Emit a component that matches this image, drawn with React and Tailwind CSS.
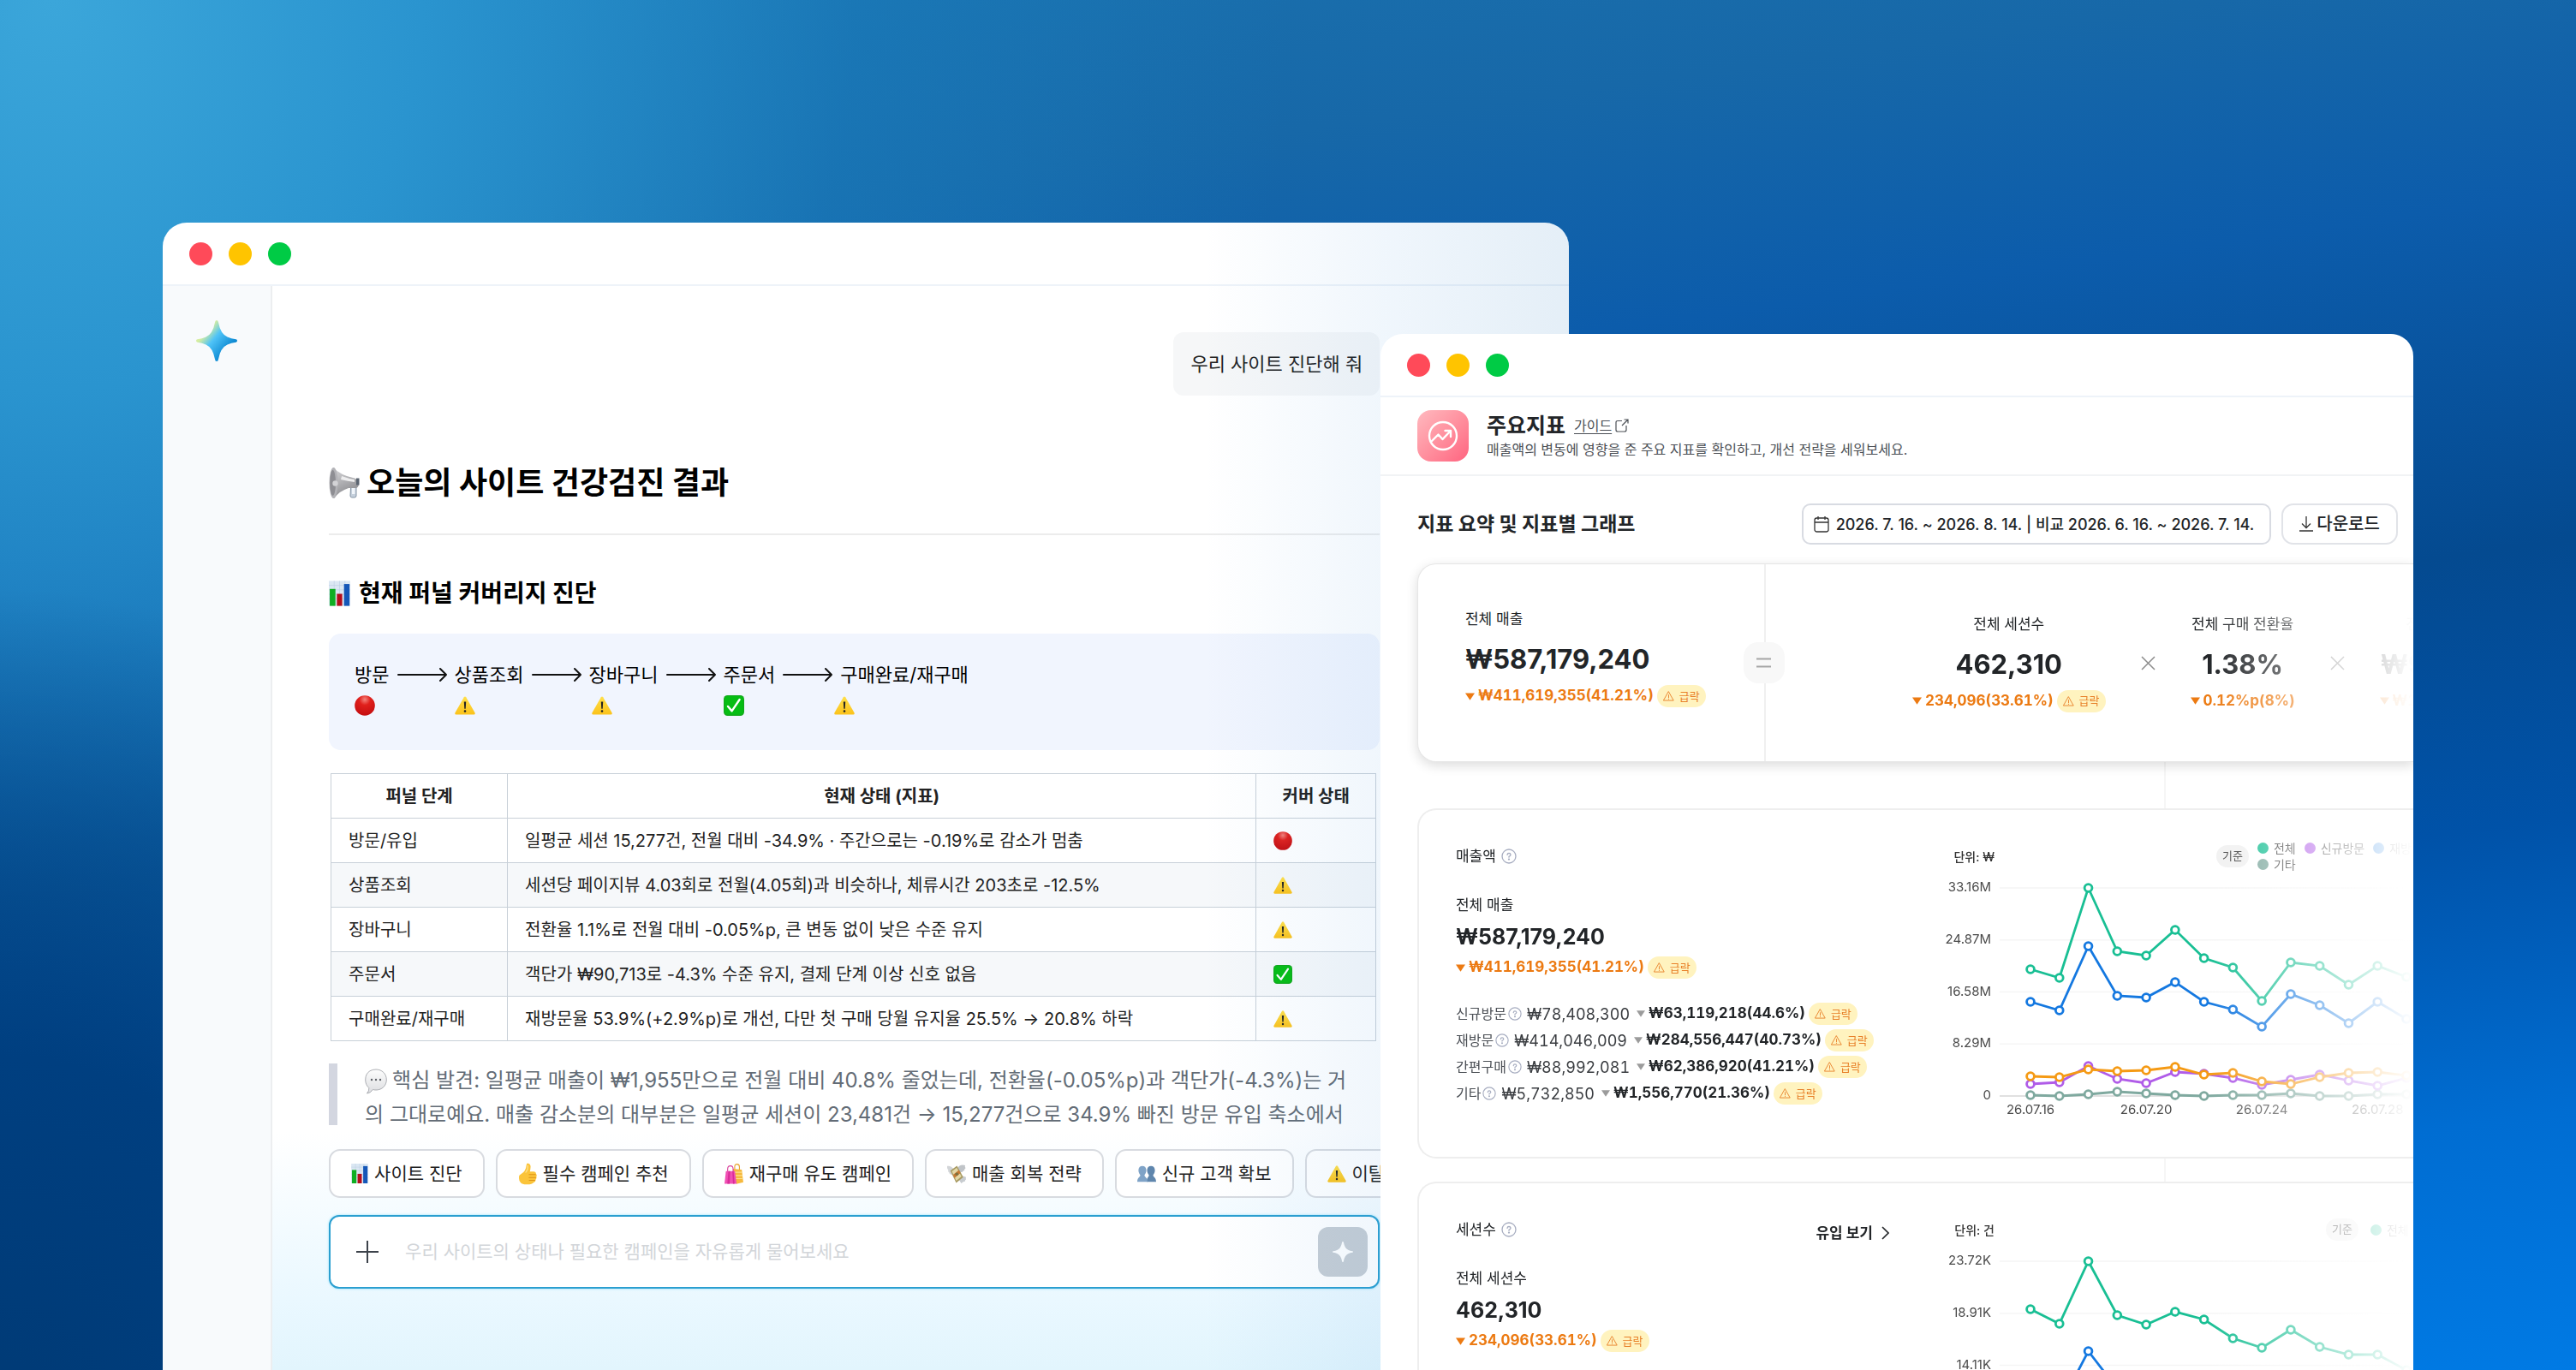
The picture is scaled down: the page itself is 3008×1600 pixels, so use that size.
import React from 'react';

const steps = ['방문', '상품조회', '장바구니', '주문서', '구매완료/재구매'];

const funnelRows = [
  { step: '방문/유입', text: '일평균 세션 15,277건, 전월 대비 -34.9% · 주간으로는 -0.19%로 감소가 멈춤', state: 'bad' },
  { step: '상품조회', text: '세션당 페이지뷰 4.03회로 전월(4.05회)과 비슷하나, 체류시간 203초로 -12.5%', state: 'warn' },
  { step: '장바구니', text: '전환율 1.1%로 전월 대비 -0.05%p, 큰 변동 없이 낮은 수준 유지', state: 'warn' },
  { step: '주문서', text: '객단가 ₩90,713로 -4.3% 수준 유지, 결제 단계 이상 신호 없음', state: 'ok' },
  { step: '구매완료/재구매', text: '재방문율 53.9%(+2.9%p)로 개선, 다만 첫 구매 당월 유지율 25.5% → 20.8% 하락', state: 'warn' },
];

const breakdown = [
  { name: '신규방문', value: '₩78,408,300', diff: '₩63,119,218(44.6%)' },
  { name: '재방문', value: '₩414,046,009', diff: '₩284,556,447(40.73%)' },
  { name: '간편구매', value: '₩88,992,081', diff: '₩62,386,920(41.21%)' },
  { name: '기타', value: '₩5,732,850', diff: '₩1,556,770(21.36%)' },
];

const salesSeries = [
  { color: '#7fa99f', points: [242, 243, 241, 238, 240, 242, 243, 242, 242, 240, 243, 243, 241, 241] },
  { color: '#b05ce8', points: [229, 227, 208, 223, 228, 215, 217, 222, 230, 224, 218, 225, 231, 222] },
  { color: '#f59a14', points: [220, 221, 212, 214, 213, 209, 218, 216, 226, 229, 221, 216, 215, 219] },
  { color: '#1478e0', points: [133, 143, 68, 126, 128, 110, 133, 142, 162, 124, 137, 158, 133, 153] },
  { color: '#19bf94', points: [95, 105, 0, 74, 79, 49, 82, 93, 132, 87, 91, 113, 91, 104] },
];

const sessionSeries = [
  { color: '#1478e0', points: [160, 170, 105, 149, 152, 150, 155, 160, 166, 158, 163, 168, 166, 170] },
  { color: '#19bf94', points: [56, 73, 0, 63, 74, 59, 68, 90, 101, 80, 100, 109, 109, 127] },
];

/* ---------- emoji style icons ---------- */

function RedDot({ className }) {
  return (
    <svg viewBox="0 0 24 24" className={className}>
      <defs>
        <radialGradient id="redDot" cx="0.5" cy="0.2" r="0.8">
          <stop offset="0" stopColor="#f4837c" />
          <stop offset="0.35" stopColor="#e0201c" />
          <stop offset="1" stopColor="#c40d10" />
        </radialGradient>
      </defs>
      <circle cx="12" cy="12" r="11.8" fill="url(#redDot)" />
    </svg>
  );
}

function Warning({ className }) {
  return (
    <svg viewBox="0 0 24 24" className={className}>
      <defs>
        <linearGradient id="warn" x1="0" y1="0" x2="0" y2="1">
          <stop offset="0" stopColor="#ffe04a" />
          <stop offset="1" stopColor="#fbc21b" />
        </linearGradient>
      </defs>
      <path d="M10.8 2.3Q12 .6 13.2 2.3L23.6 20.6Q24.2 22.4 22.4 22.5H1.6Q-.2 22.4.4 20.6Z" fill="url(#warn)" />
      <path d="M10.8 7.6h2.4l-.5 8.2h-1.4z" fill="#222" />
      <circle cx="12" cy="18.6" r="1.3" fill="#222" />
    </svg>
  );
}

function CheckBox({ className }) {
  return (
    <svg viewBox="0 0 24 24" className={className}>
      <rect width="24" height="24" rx="4.5" fill="#12a81b" />
      <rect x="1.2" y="1" width="21.6" height="21.6" rx="3.8" fill="#06bd14" />
      <path d="M5 13l4.6 5.4L18.6 5" fill="none" stroke="#fff" strokeWidth="2.4" strokeLinecap="round" strokeLinejoin="round" />
    </svg>
  );
}

function Bars({ className }) {
  return (
    <svg viewBox="0 0 24 28" className={className}>
      <rect width="24" height="28" fill="#dbe7f3" />
      <path d="M0 5h24M0 10h24M0 15h24M0 20h24M6 0v28M12 0v28M18 0v28" stroke="#bccfe2" strokeWidth="0.6" />
      <rect x="1" y="9" width="6.4" height="19" fill="#0fae22" />
      <rect x="9" y="14.5" width="6" height="13.5" fill="#b50d1b" />
      <rect x="17" y="3.5" width="6.2" height="24.5" fill="#1557b8" />
    </svg>
  );
}

function Megaphone({ className }) {
  return (
    <svg viewBox="0 0 36 38" className={className}>
      <defs>
        <linearGradient id="horn" x1="0" y1="0" x2="0.4" y2="1">
          <stop offset="0" stopColor="#d9d9db" />
          <stop offset="1" stopColor="#8b8b8f" />
        </linearGradient>
      </defs>
      <path d="M26 17h6v17q0 2-2 2h-3q-2 0-2-2z" fill="#c5d0dc" stroke="#8796a6" />
      <path d="M27 20h3.5v12H27z" fill="#f0f5fa" />
      <path d="M5 1Q14 10 28 13q6 1 7 6 0 6-4 6h-8Q13 28 6 37z" fill="url(#horn)" />
      <path d="M15 11q8 3 15 4v3q-8-1-16-3z" fill="#ededee" />
      <ellipse cx="5.5" cy="19" rx="5" ry="18" fill="#b3b3b7" />
      <ellipse cx="4.6" cy="19" rx="3.4" ry="15" fill="#8e8e93" />
      <circle cx="7.5" cy="19.5" r="3.2" fill="#d3d3d6" />
      <path d="M32 13.5h3.5v8H32z" fill="#5a6470" />
    </svg>
  );
}

function Speech({ className }) {
  return (
    <svg viewBox="0 0 26 30" className={className}>
      <defs>
        <linearGradient id="speech" x1="0" y1="0" x2="0" y2="1">
          <stop offset="0" stopColor="#fdfdfd" />
          <stop offset="1" stopColor="#dcdde0" />
        </linearGradient>
      </defs>
      <path
        d="M13 1C20 1 25.3 6 25.3 13S20 25 13 25q-2 0-3.700-.5Q7 28.500 2.500 29 5.300 26 4.800 22.500.7 19 .7 13 .7 6 6 2.700 9 1 13 1z"
        fill="url(#speech)"
        stroke="#a4a6ab"
        strokeWidth="0.9"
      />
      <circle cx="8" cy="13" r="1.200" fill="#5d6066" />
      <circle cx="13" cy="13" r="1.200" fill="#5d6066" />
      <circle cx="18" cy="13" r="1.200" fill="#5d6066" />
    </svg>
  );
}

function Thumb({ className }) {
  return (
    <svg viewBox="0 0 24 28" className={className}>
      <path
        d="M10.500 3q.3-3 2.300-2.500Q16.500 1.500 15.800 6q-.2 3-.8 5h5.200q3 .3 2.600 3 1.600 1.400.4 3.600.8 2-.8 3.600.2 2.800-2.600 3.600-2 2.600-8.200 2.600-6 .2-8.300-2.200Q.8 23 1.200 18.600.6 15.500 3.600 14.400 10 10.500 10.500 3z"
        fill="#fbc43a"
      />
      <path d="M14 14.800h8M14 18.600h8.400M14.200 22.300h7" stroke="#dd9318" strokeWidth="1.100" strokeLinecap="round" />
      <path d="M12.300 3.500q.8 4.500-2.500 8.500" fill="none" stroke="#ffe08a" strokeWidth="1.400" strokeLinecap="round" />
    </svg>
  );
}

function Bags({ className }) {
  return (
    <svg viewBox="0 0 24 26" className={className}>
      <path d="M13 8V4q0-3.400 3-3.400T19 4v4" fill="none" stroke="#e8a32c" strokeWidth="1.200" />
      <path d="M10.500 6.500 22 7.500l2 16-9 2.200z" fill="#f6b93d" />
      <path d="M13 11h9.500M13.500 15h9.500M14 19h9.500" stroke="#fbe08c" strokeWidth="1.200" />
      <path d="M4 11V7q0-4.200 3.500-4.200T11 7v4" fill="none" stroke="#d8439c" strokeWidth="1.200" />
      <path d="M1.800 9.500h11.400l2.300 16H0z" fill="#f04fb4" />
      <path d="M5 9.500h2.200l-.6 16H3.600zM10 9.500h1.600l1.200 16h-2z" fill="#d92d98" />
    </svg>
  );
}

function Money({ className }) {
  return (
    <svg viewBox="0 0 24 26" className={className}>
      <path d="M13 6q3-6 10-4-1 1.500.5 3.500-2 1-1.500 3-2 .2-2.500 2l-5 .5z" fill="#c0c4c8" />
      <path d="M0 3q5-1 8.500 4l-2 7Q3 14 2.500 11 .5 10 1.500 8-.5 6 0 3z" fill="#d2d5d8" />
      <path d="M14 19q5-5 10-2-.5 1.600 0 3-1.500.6-1 2.400-2.500.6-5 2.600z" fill="#c8ccd0" />
      <path d="M4 9 12.500 2.500 20.500 17l-9 7.500z" fill="#a89a62" />
      <path d="M6 9.800 12.200 5l6 11.300-6.600 5.500z" fill="#e3d7a6" />
      <path d="M7.500 14.200 15 8.200l2 3.800-7.500 6.300z" fill="#c87a34" />
      <circle cx="12.300" cy="13.300" r="2" fill="#7c7140" />
    </svg>
  );
}

function People({ className }) {
  return (
    <svg viewBox="0 0 24 24" className={className}>
      <path d="M17.500 2c3 0 5 2.200 5 5.400 0 3-1.300 4.600-2.300 6 0 3 3.800 3 3.800 8.600H12c0-5.600 2.800-5.600 2.800-8.600-1-1.400-2.300-3-2.300-6C12.500 4.200 14.500 2 17.500 2z" fill="#5f86ad" />
      <path d="M6.500 2c3 0 5 2.200 5 5.400 0 3-1.300 4.600-2.300 6 0 3 3.800 3 3.800 8.600H0c0-5.600 3.800-5.600 3.800-8.600-1-1.400-2.300-3-2.300-6C1.500 4.200 3.500 2 6.500 2z" fill="#7fa3c7" />
    </svg>
  );
}

function StateIcon({ state, className }) {
  if (state === 'bad') return <RedDot className={className} />;
  if (state === 'ok') return <CheckBox className={className} />;
  return <Warning className={className} />;
}

/* ---------- ui icons ---------- */

function Sparkle({ className, gradient }) {
  return (
    <svg viewBox="0 0 48 48" className={className}>
      <defs>
        <linearGradient id="sparkle" x1="0.15" y1="0.2" x2="0.8" y2="0.75">
          <stop offset="0.15" stopColor="#d5eda0" />
          <stop offset="0.45" stopColor="#4fc3f7" />
          <stop offset="1" stopColor="#0784cf" />
        </linearGradient>
      </defs>
      <path
        d="M24 0q1.800 0 2 2.500Q28.500 16 36.500 19.500 41 21.800 46.500 22.300 48 22.600 48 24t-1.500 1.700Q41 26.200 36.500 28.500 28.500 32 26 45.500 25.800 48 24 48t-2-2.500Q19.500 32 11.500 28.500 7 26.200 1.500 25.700 0 25.400 0 24t1.500-1.700Q7 21.800 11.500 19.500 19.500 16 22 2.500 22.200 0 24 0z"
        fill={gradient ? 'url(#sparkle)' : 'currentColor'}
      />
    </svg>
  );
}

function LongArrow() {
  return (
    <svg viewBox="0 0 58 20" className="h-5 w-[58px] shrink-0" fill="none" stroke="#111" strokeWidth="2" strokeLinecap="round" strokeLinejoin="round">
      <path d="M1 10h56M50 3l7 7-7 7" />
    </svg>
  );
}

function Help({ className }) {
  return (
    <svg viewBox="0 0 18 18" className={className} fill="none" stroke="#a7adc0" strokeWidth="1.300" strokeLinecap="round">
      <circle cx="9" cy="9" r="8" />
      <path d="M7 7.400Q7.200 5.500 9 5.500t2 1.700Q11 8.300 9 9.400v.8" />
      <circle cx="9" cy="12.600" r="0.500" fill="#a7adc0" />
    </svg>
  );
}

function Down({ className }) {
  return (
    <svg viewBox="0 0 12 9" className={className}>
      <path d="M0 0h12L6 9z" fill="currentColor" />
    </svg>
  );
}

function Times() {
  return (
    <svg viewBox="0 0 17 17" className="size-[17px] shrink-0" stroke="#8c8c8c" strokeWidth="1.500">
      <path d="M1 1l15 15M16 1 1 16" />
    </svg>
  );
}

function DropBadge() {
  return (
    <span className="flex h-[26px] items-center gap-1.5 rounded-full bg-[#fff3bf] px-[7px] text-[13px] leading-none font-normal text-[#e8812a]">
      <svg viewBox="0 0 14 13" className="h-3 w-[13px]" fill="none" stroke="currentColor" strokeWidth="1" strokeLinejoin="round" strokeLinecap="round">
        <path d="M7 1l6.200 11H.8zM7 5v3.500M7 10.200v.1" />
      </svg>
      급락
    </span>
  );
}

function Dots() {
  return (
    <div className="flex h-[74px] items-center gap-[19px] border-b-2 border-[#eef3f9] px-[31px]">
      <span className="size-[27px] rounded-full bg-[#ff4a59]" />
      <span className="size-[27px] rounded-full bg-[#ffc400]" />
      <span className="size-[27px] rounded-full bg-[#00cb45]" />
    </div>
  );
}

function Chip({ icon, children }) {
  return (
    <button className="flex h-[57px] shrink-0 items-center gap-[7px] rounded-[13px] border-2 border-[#d8dbe0] bg-white px-6 text-[21px] whitespace-nowrap text-[#222]">
      {icon}
      {children}
    </button>
  );
}

function Delta({ children, badge = true }) {
  return (
    <p className="flex h-[26px] items-center gap-1 text-[17px] font-bold whitespace-nowrap text-[#ec7a12] tabular-nums">
      <Down className="h-[9px] w-[11px]" />
      <span>{children}</span>
      {badge && <DropBadge />}
    </p>
  );
}

function Metric({ label, value, delta, badge }) {
  return (
    <div className="flex shrink-0 flex-col items-center">
      <p className="text-[17px] leading-6">{label}</p>
      <p className="mt-[17px] mb-3 text-[31px] leading-9 font-bold">{value}</p>
      <Delta badge={badge}>{delta}</Delta>
    </div>
  );
}

function Chart({ series, ticks, dates }) {
  const x = (i) => 106 + i * 33.77;
  return (
    <svg viewBox="0 0 553 290" className="h-[290px] w-[553px] shrink-0" fontSize="15" fill="#4a4a4a">
      {ticks.map((tick, i) => (
        <g key={tick}>
          <line x1="70" x2="553" y1={18 + i * 60.75} y2={18 + i * 60.75} stroke={tick === '0' ? '#d6d6d6' : '#f5f5f5'} strokeWidth="1.500" />
          <text x="60" y={22 + i * 60.75} textAnchor="end">{tick}</text>
        </g>
      ))}
      {dates.map((date, i) => (
        <text key={date} x={x(i * 4)} y="282" textAnchor="middle">{date}</text>
      ))}
      {series.map((s) => (
        <g key={s.color} stroke={s.color} strokeWidth="2.800">
          <polyline fill="none" points={s.points.map((y, i) => `${x(i)},${y + 18}`).join(' ')} />
          {s.points.map((y, i) => (
            <circle key={i} cx={x(i)} cy={y + 18} r="4.400" fill="#fff" />
          ))}
        </g>
      ))}
    </svg>
  );
}

function LegendItem({ dot, children }) {
  return (
    <span className="flex h-[19px] shrink-0 items-center gap-1.5 text-[14px] whitespace-nowrap">
      <span className={`size-[13px] rounded-full ${dot}`} />
      {children}
    </span>
  );
}

const fade = '[mask-image:linear-gradient(to_right,black_calc(100%-240px),transparent_100%)]';

function ChatWindow() {
  return (
    <section className="absolute top-[260px] bottom-0 left-[6.32%] flex w-[54.59%] flex-col overflow-hidden rounded-t-[28px] bg-white">
      <Dots />
      <div className="flex min-h-0 flex-1">
        <aside className="w-32 shrink-0 border-r-2 border-[#eceef0] bg-[#f8fafc] pt-10">
          <Sparkle className="mx-auto size-12" gradient />
        </aside>
        <div className="flex min-w-0 flex-1 flex-col">
          <div className="pr-[221px] pl-[66px] pt-[54px]">
            <p className="ml-auto flex h-[74px] w-fit items-center rounded-xl bg-[#f6f7f8] px-5 text-[22px] text-[#222]">우리 사이트 진단해 줘</p>

            <h1 className="mt-[78px] flex h-12 items-center gap-2 text-[36px] font-bold text-black">
              <Megaphone className="h-[38px] w-9" />
              오늘의 사이트 건강검진 결과
            </h1>
            <hr className="mt-[35px] border-t-2 border-[#ececec]" />
            <h2 className="mt-12 flex h-10 items-center gap-2.5 text-[28px] font-bold text-black">
              <Bars className="h-[30px] w-[25px]" />
              현재 퍼널 커버리지 진단
            </h2>

            <div className="mt-[27px] h-[136px] rounded-[14px] bg-[#f1f5fe] px-[30px] pt-[31px] text-[22px] leading-[34px] text-black">
              <div className="flex items-center gap-[9px] whitespace-nowrap">
                {steps.map((step, i) => (
                  <React.Fragment key={step}>
                    {i > 0 && <LongArrow />}
                    <span>{step}</span>
                  </React.Fragment>
                ))}
              </div>
              <div className="whitespace-pre">
                <RedDot className="inline size-6" />
                {' '.repeat(15)}
                <Warning className="inline size-6" />
                {' '.repeat(22)}
                <Warning className="inline size-6" />
                {' '.repeat(21)}
                <CheckBox className="inline size-6" />
                {' '.repeat(17)}
                <Warning className="inline size-6" />
              </div>
            </div>

            <table className="mx-0.5 mt-[27px] w-[calc(100%-6px)] table-fixed border-collapse text-[20px] text-[#222]">
              <thead>
                <tr className="h-[52px] bg-white">
                  <th className="w-[206px] border border-[#c8d0d8] font-bold">퍼널 단계</th>
                  <th className="border border-[#c8d0d8] font-bold">현재 상태 (지표)</th>
                  <th className="w-[140px] border border-[#c8d0d8] font-bold">커버 상태</th>
                </tr>
              </thead>
              <tbody>
                {funnelRows.map((row) => (
                  <tr key={row.step} className="h-[52px] bg-white even:bg-[#f6f8fa]">
                    <td className="border border-[#c8d0d8] px-5">{row.step}</td>
                    <td className="border border-[#c8d0d8] px-5 whitespace-nowrap">{row.text}</td>
                    <td className="border border-[#c8d0d8] px-5">
                      <StateIcon state={row.state} className="size-[22px]" />
                    </td>
                  </tr>
                ))}
              </tbody>
            </table>

            <blockquote className="mt-[26px] h-[72px] border-l-10 border-[#d3d6e0] pl-8 text-[24px] leading-10 whitespace-nowrap text-[#636c76]">
              <p>
                <Speech className="mr-1.5 inline h-[30px] w-[26px]" />
                핵심 발견: 일평균 매출이 ₩1,955만으로 전월 대비 40.8% 줄었는데, 전환율(-0.05%p)과 객단가(-4.3%)는 거
                <br />
                의 그대로예요. 매출 감소분의 대부분은 일평균 세션이 23,481건 → 15,277건으로 34.9% 빠진 방문 유입 축소에서
              </p>
            </blockquote>
          </div>

          <div className="mt-2 flex-1 bg-linear-to-b from-white via-[#eaf8ff] via-70% to-[#e2f5fd] pr-[221px] pl-[66px] pt-5">
            <div className="flex gap-[13px]">
              <Chip icon={<Bars className="h-[23px] w-5" />}>사이트 진단</Chip>
              <Chip icon={<Thumb className="h-[26px] w-[22px]" />}>필수 캠페인 추천</Chip>
              <Chip icon={<Bags className="h-6 w-[22px]" />}>재구매 유도 캠페인</Chip>
              <Chip icon={<Money className="h-6 w-[22px]" />}>매출 회복 전략</Chip>
              <Chip icon={<People className="size-[22px]" />}>신규 고객 확보</Chip>
              <Chip icon={<Warning className="size-[22px]" />}>이탈 고객</Chip>
            </div>
            <form className="mt-5 flex h-[86px] items-center rounded-xl border-2 border-[#2b9fd0] bg-white pr-3 pl-[29px] shadow-[0_0_3px_#8fe0fa]">
              <button type="button" aria-label="추가">
                <svg viewBox="0 0 28 28" className="size-7" stroke="#3d434b" strokeWidth="2">
                  <path d="M14 1v26M1 14h26" />
                </svg>
              </button>
              <input
                aria-label="질문 입력"
                className="ml-[30px] min-w-0 flex-1 text-[21px] outline-none placeholder:text-[#d2d5d9]"
                placeholder="우리 사이트의 상태나 필요한 캠페인을 자유롭게 물어보세요"
              />
              <button type="submit" aria-label="보내기" className="flex size-[58px] items-center justify-center rounded-xl bg-[#c6cdd4] text-white">
                <Sparkle className="size-6" />
              </button>
            </form>
          </div>
        </div>
      </div>
      {/* blue tint that grows towards the right edge */}
      <div className="pointer-events-none absolute inset-0 bg-[linear-gradient(to_right,transparent_74%,#3c8fdc14_87%,#2a7cc020_100%)]" />
    </section>
  );
}

function ReportWindow() {
  return (
    <section className="absolute top-[390px] bottom-0 left-[53.59%] w-[40.09%] overflow-hidden rounded-t-[26px] bg-white text-[#222528]">
      <Dots />
      <header className="flex h-[92px] items-center gap-[21px] border-b-2 border-[#f1f3f5] pl-[43px]">
        <span className="flex size-[60px] items-center justify-center rounded-2xl bg-linear-to-br from-[#ffb9bf] to-[#ff6380]">
          <svg viewBox="0 0 36 36" className="size-9" fill="none" stroke="#fff" strokeWidth="2.400" strokeLinecap="round" strokeLinejoin="round">
            <circle cx="18" cy="18" r="16" />
            <path d="M4.500 24.500l8-8 5 5.500 9-9.500M20.500 12h6.500v7" />
          </svg>
        </span>
        <div>
          <div className="flex items-center gap-2.5">
            <h2 className="text-[25px] leading-8 font-bold">주요지표</h2>
            <a href="#guide" className="flex items-center gap-1 text-[16px] text-[#4b4f55]">
              <span className="underline underline-offset-3">가이드</span>
              <svg viewBox="0 0 16 16" className="size-4" fill="none" stroke="currentColor" strokeWidth="1.200">
                <path d="M8 2.500H3Q1 2.500 1 4.500V13q0 2 2 2h8q2 0 2-2V8M10.500 1H15v4.500M15 1 8 8" />
              </svg>
            </a>
          </div>
          <p className="text-[16px] leading-6 text-[#4b4f55]">매출액의 변동에 영향을 준 주요 지표를 확인하고, 개선 전략을 세워보세요.</p>
        </div>
      </header>

      <div className="pt-8 pl-[43px]">
        <div className="flex h-12 items-center pr-[18px]">
          <h3 className="text-[23px] font-bold">지표 요약 및 지표별 그래프</h3>
          <button className="ml-auto flex h-12 items-center gap-2 rounded-[10px] border-2 border-[#d8dbe2] pr-[18px] pl-3 text-[18px] font-medium whitespace-nowrap">
            <svg viewBox="0 0 18 20" className="h-5 w-[18px]" fill="none" stroke="#333" strokeWidth="1.300">
              <rect x="1" y="3" width="16" height="16" rx="2.500" />
              <path d="M1 8h16M5 1v4M13 1v4" />
            </svg>
            2026. 7. 16. ~ 2026. 8. 14. | 비교 2026. 6. 16. ~ 2026. 7. 14.
          </button>
          <button className="ml-3 flex h-12 items-center gap-1 rounded-[14px] border-2 border-[#e1e3e8] px-[19px] text-[20px] font-medium">
            <svg viewBox="0 0 16 18" className="h-[18px] w-4" fill="none" stroke="#333" strokeWidth="1.300">
              <path d="M8 0v13M3 8.500l5 5 5-5M0 17h16" />
            </svg>
            다운로드
          </button>
        </div>

        <div className="relative mt-[22px] flex h-[232px] rounded-l-[22px] border border-r-0 border-[#e6e6e6] bg-white shadow-[0_4px_14px_rgba(0,0,0,0.14)]">
          <div className="relative w-[406px] shrink-0 border-r-2 border-[#f0f0f0] pt-[52px] pl-[55px]">
            <p className="text-[17px] leading-6">전체 매출</p>
            <p className="mt-[17px] mb-3 text-[31px] leading-9 font-bold">₩587,179,240</p>
            <Delta>₩411,619,355(41.21%)</Delta>
            <span className="absolute top-1/2 -right-6 flex size-12 -translate-y-1/2 items-center justify-center rounded-[17px] bg-[#f8f8f8]">
              <svg viewBox="0 0 17 12" className="h-3 w-[17px]" stroke="#a6a6a6" strokeWidth="1.800">
                <path d="M0 1.500h17M0 10.500h17" />
              </svg>
            </span>
          </div>
          <div className={`flex min-w-0 flex-1 items-center gap-[41px] overflow-hidden pl-[171px] ${fade}`}>
            <Metric label="전체 세션수" value="462,310" delta="234,096(33.61%)" />
            <Times />
            <Metric label="전체 구매 전환율" value="1.38%" delta="0.12%p(8%)" badge={false} />
            <Times />
            <Metric label="전체 객단가" value="₩92,036" delta="₩12,340(11%)" badge={false} />
          </div>
        </div>

        <div className="ml-[75%] h-[54px] w-0.5 bg-[#f6f6f6]" />

        <article className="overflow-hidden rounded-l-[22px] border-2 border-r-0 border-[#eeeeee] bg-white">
          <div className={`flex h-[405px] ${fade}`}>
            <div className="w-[565px] shrink-0 pt-[42px] pl-[43px]">
              <h4 className="flex items-center gap-1.5 text-[17px] leading-6">
                매출액 <Help className="size-[18px]" />
              </h4>
              <p className="mt-[33px] text-[17px] leading-6">전체 매출</p>
              <p className="mt-[9px] mb-[7px] text-[25px] leading-8 font-bold">₩587,179,240</p>
              <Delta>₩411,619,355(41.21%)</Delta>
              <ul className="mt-7 flex flex-col gap-[5px]">
                {breakdown.map((row) => (
                  <li key={row.name} className="flex h-[26px] items-center gap-1 text-[17px] whitespace-nowrap tabular-nums">
                    <span className="flex items-center gap-0.5 text-[16px] text-[#4b4f55]">
                      {row.name}
                      <Help className="size-4" />
                    </span>
                    <span className="ml-0.5 text-[18px] text-[#3a3d41]">{row.value}</span>
                    <Down className="ml-1 h-2 w-2.5 text-[#9b9b9b]" />
                    <b>{row.diff}</b>
                    <DropBadge />
                  </li>
                ))}
              </ul>
            </div>
            <div className="ml-[43px] min-w-0 pt-[35px]">
              <div className="flex h-[38px] items-center text-[#444]">
                <span className="w-[64px] shrink-0 text-right text-[14px] font-medium text-[#333]">단위: ₩</span>
                <span className="ml-[259px] flex h-[26px] shrink-0 items-center rounded-full bg-[#f1f1f1] px-[7px] text-[13px]">기준</span>
                <div className="ml-2.5">
                  <div className="flex gap-2.5">
                    <LegendItem dot="bg-[#19bf94]">전체</LegendItem>
                    <LegendItem dot="bg-[#b05ce8]">신규방문</LegendItem>
                    <LegendItem dot="bg-[#1478e0]">재방문</LegendItem>
                  </div>
                  <LegendItem dot="bg-[#7fa99f]">기타</LegendItem>
                </div>
              </div>
              <Chart
                series={salesSeries}
                ticks={['33.16M', '24.87M', '16.58M', '8.29M', '0']}
                dates={['26.07.16', '26.07.20', '26.07.24', '26.07.28']}
              />
            </div>
          </div>
        </article>

        <div className="ml-[75%] h-[27px] w-0.5 bg-[#f6f6f6]" />

        <article className="overflow-hidden rounded-l-[22px] border-2 border-r-0 border-[#eeeeee] bg-white">
          <div className={`flex h-[405px] ${fade}`}>
            <div className="w-[565px] shrink-0 pt-[42px] pl-[43px]">
              <div className="flex h-6 items-start justify-between pr-4">
                <h4 className="flex items-center gap-1.5 text-[17px] leading-6">
                  세션수 <Help className="size-[18px]" />
                </h4>
                <a href="#inflow" className="flex items-center gap-2.5 text-[17px] leading-8 font-bold">
                  유입 보기
                  <svg viewBox="0 0 9 16" className="h-4 w-[9px]" fill="none" stroke="currentColor" strokeWidth="1.600">
                    <path d="M1 1l7 7-7 7" />
                  </svg>
                </a>
              </div>
              <p className="mt-[33px] text-[17px] leading-6">전체 세션수</p>
              <p className="mt-[9px] mb-[7px] text-[25px] leading-8 font-bold">462,310</p>
              <Delta>234,096(33.61%)</Delta>
            </div>
            <div className="ml-[43px] min-w-0 pt-[35px]">
              <div className="flex h-[38px] items-center text-[#444]">
                <span className="w-[64px] shrink-0 text-right text-[14px] font-medium text-[#333]">단위: 건</span>
                <span className="ml-[387px] flex h-[26px] shrink-0 items-center rounded-full bg-[#f1f1f1] px-[7px] text-[13px]">기준</span>
                <div className="ml-3.5">
                  <LegendItem dot="bg-[#19bf94]">전체</LegendItem>
                </div>
              </div>
              <Chart series={sessionSeries} ticks={['23.72K', '18.91K', '14.11K']} dates={[]} />
            </div>
          </div>
        </article>
      </div>
    </section>
  );
}

function App() {
  return (
    <main className="relative h-screen overflow-hidden bg-[radial-gradient(ellipse_28%_62%_at_0%_105%,#003a75_0%,#003f80_45%,transparent_100%),radial-gradient(ellipse_48%_95%_at_2%_0%,#3ba6da_0%,#2a94cf_30%,#1a80c077_65%,transparent_100%),linear-gradient(172deg,#1c74b0_0%,#1768a8_18%,#0c5cab_32%,#044a90_52%,#0052a8_68%,#006dd2_85%,#007ae4_100%)] font-['Inter','Noto_Sans_CJK_KR',sans-serif]">
      <ChatWindow />
      <ReportWindow />
    </main>
  );
}

export default App;
